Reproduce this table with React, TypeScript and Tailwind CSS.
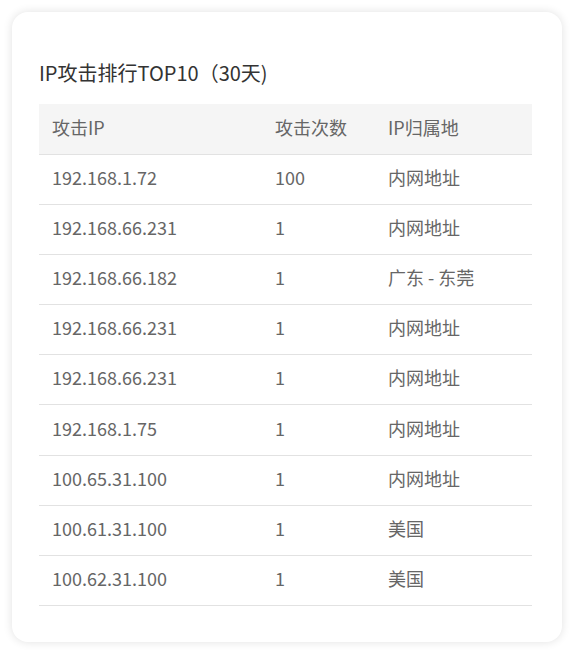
import React from "react";

const rows = [
  { ip: "192.168.1.72", count: 100, place: "内网地址" },
  { ip: "192.168.66.231", count: 1, place: "内网地址" },
  { ip: "192.168.66.182", count: 1, place: "广东 - 东莞" },
  { ip: "192.168.66.231", count: 1, place: "内网地址" },
  { ip: "192.168.66.231", count: 1, place: "内网地址" },
  { ip: "192.168.1.75", count: 1, place: "内网地址" },
  { ip: "100.65.31.100", count: 1, place: "内网地址" },
  { ip: "100.61.31.100", count: 1, place: "美国" },
  { ip: "100.62.31.100", count: 1, place: "美国" },
];

const App = () => {
  return (
    <div
      className="w-[574px] h-[654px] bg-white p-3"
      style={{ fontFamily: '"Noto Sans CJK SC", "Noto Sans", sans-serif' }}
    >
      <div className="h-[630px] rounded-2xl bg-white shadow-[0_0_10px_rgba(0,0,0,0.12)] pl-[27px] pr-[30px] pt-[47px]">
        <h2 className="text-[20px] leading-[28px] text-[#333] mb-[17px]">
          IP攻击排行TOP10（30天)
        </h2>
        <table className="w-full border-collapse text-[18px] text-[#666]">
          <thead>
            <tr className="bg-[#f5f5f5] border-b border-[#e2e2e2] h-[50px]">
              <th className="w-[224px] text-left font-normal pl-[13px] pb-[2px]">攻击IP</th>
              <th className="w-[113px] text-left font-normal pl-[12px] pb-[2px]">攻击次数</th>
              <th className="text-left font-normal pl-[12px] pb-[2px]">IP归属地</th>
            </tr>
          </thead>
          <tbody>
            {rows.map((r, i) => (
              <tr key={i} className="border-b border-[#e2e2e2] h-[50.2px]">
                <td className="pl-[13px] pb-[4px]">{r.ip}</td>
                <td className="pl-[12px] pb-[4px]">{r.count}</td>
                <td className="pl-[12px] pb-[4px]">{r.place}</td>
              </tr>
            ))}
          </tbody>
        </table>
      </div>
    </div>
  );
};

export default App;
